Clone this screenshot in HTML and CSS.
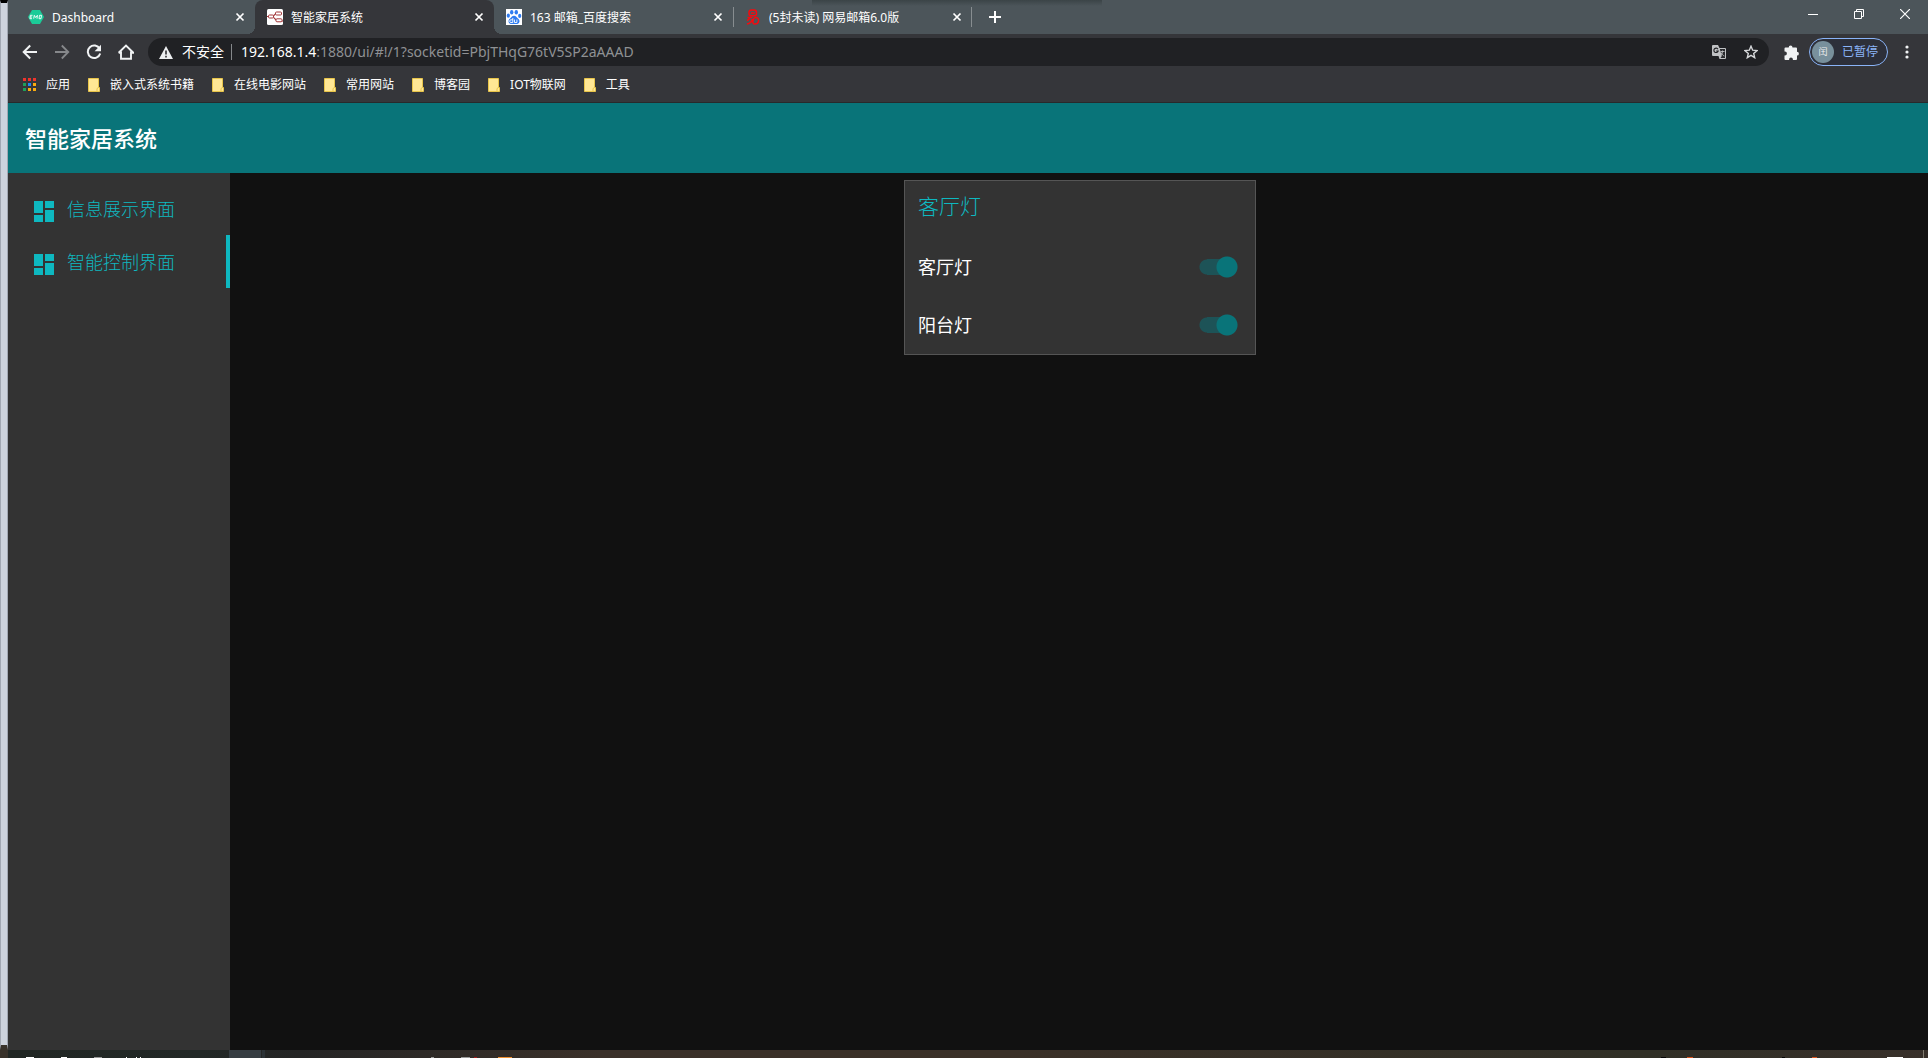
FILE: index.html
```html
<!DOCTYPE html>
<html lang="zh-CN">
<head>
<meta charset="utf-8">
<title>智能家居系统</title>
<link rel="stylesheet" href="styles.css">
</head>
<body>
<svg class="defs" width="0" height="0" aria-hidden="true">
  <symbol id="close" viewBox="0 0 10 10"><path d="M1.5 1.5l7 7M8.500 1.5l-7 7" fill="none" stroke="currentColor" stroke-width="1.7"/></symbol>
  <symbol id="folder" viewBox="0 0 12 14"><path d="M.5.5h10v9h1v4H.5z" fill="#ffe794" stroke="#e8c54a"/><path d="M9 13.500v-3l1.500-1" fill="none" stroke="#e8c54a"/></symbol>
  <symbol id="dash" viewBox="0 0 20 21"><path d="M0 0h9v12H0zM11 0h9v7h-9zM0 14h9v7H0zM11 9h9v12h-9z" fill="currentColor"/></symbol>
</svg>
<div class="desktop">
  <div class="edge"></div>
  <div class="browser">
    <header class="tabstrip">
      <div class="tabs">
        <div class="tab"><svg class="fav" viewBox="0 0 16 16"><path d="M4 1h8l4 7-4 7H4L0 8z" fill="#1bcb98"/><path d="M4.500 6.300H2.400L1.900 9.700H4M2.200 8h1.900M5.700 9.700l.6-3.400 1.300 2.200 1.800-2.200-.4 3.400M11.500 6.300h2l-.5 3.400h-2z" fill="none" stroke="#fff" stroke-width=".9"/></svg><span class="tab-title">Dashboard</span><button class="tab-close" aria-label="关闭"><svg><use href="#close"/></svg></button></div>
        <div class="tab active"><svg class="fav" viewBox="0 0 16 16"><rect width="16" height="16" rx="1.500" fill="#fff"/><path d="M0 7.500h4.500C8 7.500 7 4.500 9.500 4.500M4.500 7.500C8 7.500 8 12 11 12h5" fill="none" stroke="#a4393c" stroke-width="1.200"/><rect x="8.500" y="3" width="6" height="3" rx="1" fill="#fff" stroke="#a4393c"/><rect x="1.500" y="6" width="5" height="3" rx="1" fill="#fff" stroke="#a4393c"/><rect x="9" y="9.800" width="6" height="3" rx="1" fill="#fff" stroke="#a4393c"/></svg><span class="tab-title">智能家居系统</span><button class="tab-close" aria-label="关闭"><svg><use href="#close"/></svg></button></div>
        <div class="tab"><svg class="fav" viewBox="0 0 16 16"><path d="M0 0h16v16H0z" fill="#fff"/><g fill="#2f7cf0"><ellipse cx="5.700" cy="3.300" rx="1.700" ry="2.300"/><ellipse cx="10.300" cy="3.300" rx="1.700" ry="2.300"/><ellipse cx="2.300" cy="6.700" rx="1.600" ry="2.100"/><ellipse cx="13.700" cy="6.900" rx="1.600" ry="2.100"/><path d="M8 6.700c2 0 2.700 1.900 4.200 3.100 2.200 1.700 1.400 5.200-1.200 5.200H5c-2.600 0-3.400-3.500-1.200-5.200C5.300 8.600 6 6.700 8 6.700z"/></g><path d="M6.800 9v4.500H5a1.200 1.200 0 010-2.700h1.800M8.500 10.500v3h2.400v-3" fill="none" stroke="#fff" stroke-width=".9"/></svg><span class="tab-title">163 邮箱_百度搜索</span><button class="tab-close" aria-label="关闭"><svg><use href="#close"/></svg></button></div>
        <div class="tab divided"><svg class="fav" viewBox="0 0 16 16"><g fill="none" stroke="#f60a0e" stroke-width="1.500"><rect x="4" y="1" width="7.500" height="5.800" rx="2.400"/><path d="M6 3.900h3.600M2.500 8.600h4.800M4.500 8.600c0 1.500-1 2.400-2.500 2.900M7 10c0 2.500-2 4.500-5 5M10 8.600c2.500-.5 4 1 3.500 3.500-.3 2-1.500 2.900-3.500 2.900-2 0-2.500-1.500-2-3.200.3-1.600.8-2.800 2-3.200z"/></g></svg><span class="tab-title">(5封未读) 网易邮箱6.0版</span><button class="tab-close" aria-label="关闭"><svg><use href="#close"/></svg></button></div>
      </div>
      <button class="newtab" aria-label="新标签页"><svg width="12" height="12" viewBox="0 0 12 12"><path d="M6 0v12M0 6h12" stroke="#fff" stroke-width="2"/></svg></button>
      <div class="win">
        <button aria-label="最小化"><svg width="10" height="10" viewBox="0 0 10 10"><path d="M0 5.500h10" stroke="#fff"/></svg></button>
        <button aria-label="还原"><svg width="10" height="10" viewBox="0 0 10 10"><path d="M.5 2.500h7v7h-7zM2.500 2.500v-2h7v7h-2" fill="none" stroke="#fff"/></svg></button>
        <button aria-label="关闭窗口"><svg width="10" height="10" viewBox="0 0 10 10"><path d="M0 0l10 10M10 0L0 10" stroke="#fff" stroke-width="1.200"/></svg></button>
      </div>
    </header>
    <nav class="toolbar">
      <button class="tool" aria-label="后退"><svg width="16" height="16" viewBox="0 0 16 16"><path d="M15 8H2M8.200 1.500L1.700 8l6.500 6.500" fill="none" stroke="#f1f3f4" stroke-width="2"/></svg></button>
      <button class="tool" aria-label="前进"><svg width="16" height="16" viewBox="0 0 16 16"><path d="M1 8h13M7.800 1.500L14.300 8l-6.500 6.500" fill="none" stroke="#86888b" stroke-width="1.800"/></svg></button>
      <button class="tool" aria-label="刷新"><svg width="16" height="16" viewBox="0 0 16 16"><path d="M13.700 4.800A6.300 6.300 0 1014.200 9.500" fill="none" stroke="#f1f3f4" stroke-width="2"/><path d="M15 .8v6.400H8.600z" fill="#f1f3f4"/></svg></button>
      <button class="tool" aria-label="主页"><svg width="16" height="16" viewBox="0 0 16 16"><path d="M3 7.500V14.800h10V7.500M.7 8.700L8 1.600l7.300 7.100H12.500" fill="none" stroke="#f1f3f4" stroke-width="1.900"/><path d="M.7 8.700h3" stroke="#f1f3f4" stroke-width="1.900"/></svg></button>
      <div class="omnibox">
        <svg width="14" height="13" viewBox="0 0 14 13"><path d="M7 0l7 13H0z" fill="#eceef0"/><path d="M7 4.500v4M7 9.800v1.700" stroke="#202124" stroke-width="1.500"/></svg>
        <span class="insecure">不安全</span>
        <a class="url" href="#"><b>192.168.1.4</b>:1880/ui/#!/1?socketid=PbjTHqG76tV5SP2aAAAD</a>
        <button class="omni-btn" aria-label="翻译"><svg width="14" height="14" viewBox="0 0 14 14"><path d="M1 0h5l1.500 3H13a1 1 0 011 1v9a1 1 0 01-1 1H7.500L6.500 11H1a1 1 0 01-1-1V1a1 1 0 011-1z" fill="#c0c2c4"/><path d="M7.800 4H13v9H8.500l1.300-2z" fill="#292a2d"/><path d="M6 4.200A2.200 2.200 0 106.200 6H4.200" fill="none" stroke="#202124" stroke-width="1.100"/><path d="M8.500 6.500h4M10.500 5.500v1c0 2-1 3-2 4M9 7.500c1 2 2 3 3.300 3.500" fill="none" stroke="#c0c2c4" stroke-width=".9"/></svg></button>
        <button class="omni-btn" aria-label="收藏"><svg width="14" height="14" viewBox="0 0 14 14"><path d="M7 1.200l1.700 4 4.300.4-3.300 2.800 1 4.300L7 10.400l-3.700 2.300 1-4.300L1 5.600l4.300-.4z" fill="none" stroke="#d6d8da" stroke-width="1.400"/></svg></button>
      </div>
      <button class="ext" aria-label="扩展程序"><svg width="15" height="15" viewBox="0 0 15 15"><path d="M1.500 2.500h3.200a1.900 1.900 0 013.800 0h3.500a1 1 0 011 1v3.300a1.900 1.900 0 010 3.800V14a1 1 0 01-1 1H8.900v-.5a1.900 1.900 0 00-3.800 0v.5H1.500a1 1 0 01-1-1v-3.600H1a1.900 1.900 0 000-3.800H.5V3.500a1 1 0 011-1z" fill="#f1f3f4"/></svg></button>
      <button class="profile"><span class="avatar">闰</span><span>已暂停</span></button>
      <button class="more" aria-label="更多"><svg width="4" height="14" viewBox="0 0 4 14"><g fill="#f1f3f4"><circle cx="2" cy="2" r="1.600"/><circle cx="2" cy="7" r="1.600"/><circle cx="2" cy="12" r="1.600"/></g></svg></button>
    </nav>
    <nav class="bookmarks">
      <a href="#"><svg width="13" height="14" viewBox="0 0 13 14"><path d="M0 0h3v3H0zM5 0h3v3H5zM10 0h3v3h-3z" fill="#f0342c"/><path d="M0 5h3v3H0zM0 10h3v3H0z" fill="#1da05a"/><path d="M5 5h3v3H5z" fill="#2188f5"/><path d="M10 5h3v3h-3zM5 10h3v3H5zM10 10h3v3h-3z" fill="#f9ab10"/></svg>应用</a>
      <a href="#"><svg class="folder"><use href="#folder"/></svg>嵌入式系统书籍</a>
      <a href="#"><svg class="folder"><use href="#folder"/></svg>在线电影网站</a>
      <a href="#"><svg class="folder"><use href="#folder"/></svg>常用网站</a>
      <a href="#"><svg class="folder"><use href="#folder"/></svg>博客园</a>
      <a href="#"><svg class="folder"><use href="#folder"/></svg>IOT物联网</a>
      <a href="#"><svg class="folder"><use href="#folder"/></svg>工具</a>
    </nav>
    <div class="page">
      <header class="appbar"><h1>智能家居系统</h1></header>
      <div class="body">
        <nav class="sidebar">
          <a href="#"><svg width="20" height="21"><use href="#dash"/></svg><span>信息展示界面</span></a>
          <a href="#" class="current"><svg width="20" height="21"><use href="#dash"/></svg><span>智能控制界面</span></a>
        </nav>
        <main>
          <section class="card">
            <h2>客厅灯</h2>
            <label class="row">客厅灯<input type="checkbox" class="switch" checked></label>
            <label class="row">阳台灯<input type="checkbox" class="switch" checked></label>
          </section>
        </main>
      </div>
    </div>
  </div>
</div>
<footer class="taskbar">
  <svg width="540" height="8" viewBox="0 0 540 8"><path d="M229 0h32v8h-32z" fill="#363d42"/><path d="M262 0h3v8h-3z" fill="#2b3236"/><path d="M26 7.500h8M61 7.500h6M126 7.500h1M136 7.500h1M140 7.500h1" stroke="#fff"/><path d="M94 7.500h8M431 7.500h3M461 7.500h9" stroke="#999"/><path d="M474 7.500h3" stroke="#a01818"/><path d="M498 7.500h14" stroke="#f09030"/></svg>
  <svg width="368" height="8" viewBox="0 0 368 8"><path d="M101 7.500h5M222 7.500h3" stroke="#050505"/><path d="M127 7.500h6M252 7.500h5" stroke="#d9541e"/><path d="M327 7.500h16" stroke="#fff"/><path d="M363.500 0v8" stroke="#817c70"/></svg>
</footer>
</body>
</html>
```
FILE: styles.css
```css
* { box-sizing: border-box; }
body {
  margin: 0;
  min-height: 100vh;
  display: flex;
  flex-direction: column;
  background: #111;
  color: #fff;
  font: 12px/16px "Noto Sans", "Noto Sans CJK SC", sans-serif;
}
button { border: 0; padding: 0; background: none; color: inherit; font: inherit; display: flex; align-items: center; justify-content: center; }
a { color: inherit; text-decoration: none; }
svg { display: block; flex: none; }
.defs { position: absolute; }
.desktop { flex: 1; display: flex; }
.edge {
  width: 8px;
  background: #cdd3dd;
  border-top: 3px solid #000;
  border-left: 1px solid #a2a8b3;
  border-right: 1px solid #a2a8b3;
  border-bottom: 5px solid #38322a;
}
.browser { flex: 1; min-width: 0; display: flex; flex-direction: column; background: #35363a; }

.tabstrip {
  height: 34px;
  display: flex;
  padding-left: 8px;
  background: linear-gradient(#3b4447, #4c555a) 804px 0 / 290px 6px no-repeat, #4c555a;
}
.tabs { display: flex; flex: 0 1 956px; min-width: 0; }
.tab { flex: 1 1 0; min-width: 0; display: flex; align-items: center; gap: 8px; padding: 0 10px 0 12px; }
.fav { width: 16px; height: 16px; }
.tab-title { flex: 1; padding-top: 2px; white-space: nowrap; overflow: hidden; }
.tab-close { width: 10px; height: 10px; }
.tab-close svg { width: 10px; height: 10px; }
.tab.active { background: #35363a; border-radius: 8px 8px 0 0; position: relative; }
.tab.active::before, .tab.active::after {
  content: "";
  position: absolute;
  bottom: 0;
  width: 8px;
  height: 8px;
}
.tab.active::before { left: -8px; background: radial-gradient(circle at 0 0, transparent 8px, #35363a 8px); }
.tab.active::after { right: -8px; background: radial-gradient(circle at 100% 0, transparent 8px, #35363a 8px); }
.tab.divided { background: linear-gradient(#878d90, #878d90) left center / 1px 20px no-repeat, linear-gradient(#878d90, #878d90) right center / 1px 20px no-repeat; }
.newtab { width: 46px; }
.win { margin-left: auto; display: flex; height: 28px; }
.win button { width: 46px; }

.toolbar { height: 36px; display: flex; align-items: center; padding: 0 16px 0 6px; }
.tool { width: 32px; height: 28px; }
.omnibox { flex: 1; min-width: 0; height: 28px; margin: 0 14px 0 6px; padding: 0 2px 0 11px; border-radius: 14px; background: #202124; display: flex; align-items: center; font-size: 14px; }
.insecure { margin: 0 7px 0 9px; padding-right: 7px; border-right: 1px solid #85888b; }
.url { flex: 1; min-width: 0; margin-left: 2px; line-height: 24px; color: #8f9194; white-space: nowrap; }
.url b { font-weight: 400; color: #fff; }
.omni-btn { width: 32px; height: 28px; }
.ext { width: 16px; margin-right: 10px; }
.profile { height: 28px; width: 79px; border: 1px solid #8ab4f8; border-radius: 14px; background: #2d303a; color: #8ab4f8; justify-content: flex-start; gap: 8px; padding-left: 2px; }
.avatar { width: 22px; height: 22px; border-radius: 50%; background: #78909c; color: #eee; font-size: 9px; line-height: 22px; }
.more { width: 10px; margin-left: 14px; }

.bookmarks { height: 33px; padding: 0 15px 2px; display: flex; align-items: center; gap: 18px; border-bottom: 1px solid #28292b; white-space: nowrap; }
.bookmarks a { display: flex; align-items: center; gap: 10px; }
.folder { width: 12px; height: 14px; }

.page { flex: 1; display: flex; flex-direction: column; background: #111; }
.appbar { height: 70px; background: #097479; padding: 0 17px; display: flex; align-items: center; }
h1 { margin: 0; font-size: 22px; line-height: 28px; font-weight: 500; }
.body { flex: 1; display: flex; }
.sidebar { width: 222px; background: #333; padding-top: 9px; color: #0eb8c0; font-size: 18px; line-height: 24px; font-weight: 300; }
.sidebar a { height: 53px; display: flex; align-items: center; gap: 13px; padding-left: 26px; }
.sidebar svg { margin-top: 6px; }
.sidebar .current { border-right: 4px solid #0eb8c0; }
main { flex: 1; display: flex; justify-content: center; align-items: flex-start; padding: 7px 6px 7px 8px; }
.card { width: 352px; border: 1px solid #555; background: #333; padding: 0 12px 0 13px; font-size: 18px; line-height: 24px; }
h2 { margin: 0; padding-top: 11px; height: 57px; color: #0eb8c0; font-size: 21px; line-height: 28px; font-weight: 300; }
.row { height: 58px; display: flex; align-items: center; justify-content: space-between; }
.switch {
  appearance: none;
  margin: 0 5px 0 0;
  width: 39px;
  height: 22px;
  background:
    radial-gradient(circle at 28px 11px, #097479 10px, transparent 11px),
    linear-gradient(#1d5357, #1d5357) 8px center / 20px 16px no-repeat,
    radial-gradient(circle at 8px 11px, #1d5357 7px, transparent 8px);
}

.taskbar { height: 8px; display: flex; justify-content: space-between; overflow: hidden; background: linear-gradient(90deg, #38322a 8px, #212724 8px, #222826 200px, #242424 300px, #3a3029 600px, #3a3027 1000px, #302f26 1650px, #38302a); }
```
